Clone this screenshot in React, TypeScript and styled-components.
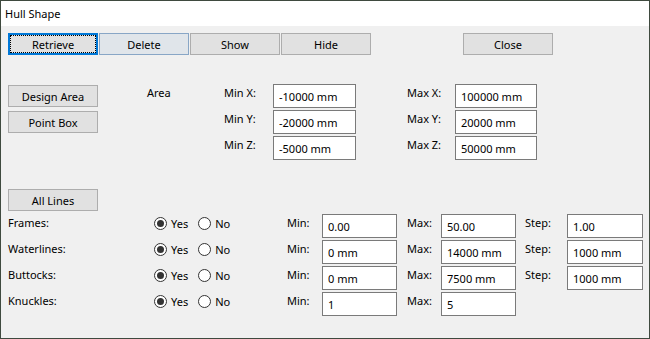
import React from 'react';
import styled, { createGlobalStyle, css } from 'styled-components';

const GlobalStyle = createGlobalStyle`
  html, body {
    margin: 0;
    padding: 0;
    background: #ffffff;
  }
  body {
    font-family: 'Noto Sans', 'Open Sans', sans-serif;
    font-size: 11px;
    color: #000;
  }
  * {
    box-sizing: border-box;
  }
`;

type LineRow = {
  name: string;
  min: string;
  max: string;
  step?: string;
};

const lineRows: LineRow[] = [
  { name: 'Frames:', min: '0.00', max: '50.00', step: '1.00' },
  { name: 'Waterlines:', min: '0 mm', max: '14000 mm', step: '1000 mm' },
  { name: 'Buttocks:', min: '0 mm', max: '7500 mm', step: '1000 mm' },
  { name: 'Knuckles:', min: '1', max: '5' },
];

const minCoords = [
  { label: 'Min X:', value: '-10000 mm' },
  { label: 'Min Y:', value: '-20000 mm' },
  { label: 'Min Z:', value: '-5000 mm' },
];

const maxCoords = [
  { label: 'Max X:', value: '100000 mm' },
  { label: 'Max Y:', value: '20000 mm' },
  { label: 'Max Z:', value: '50000 mm' },
];

const App = (): JSX.Element => {
  return (
    <>
      <GlobalStyle />
      <StyledWindow>
        <StyledTitleBar>Hull Shape</StyledTitleBar>
        <StyledBody>
          <StyledToolbar>
            <StyledButton $variant="focused">Retrieve</StyledButton>
            <StyledButton $variant="hover">Delete</StyledButton>
            <StyledButton>Show</StyledButton>
            <StyledButton>Hide</StyledButton>
            <StyledCloseButton>Close</StyledCloseButton>
          </StyledToolbar>

          <StyledAreaSection>
            <StyledSideButtons>
              <StyledButton>Design Area</StyledButton>
              <StyledButton>Point Box</StyledButton>
            </StyledSideButtons>
            <StyledAreaLabel>Area</StyledAreaLabel>
            <StyledCoordGroup $labelWidth={49} $inputWidth={83}>
              {minCoords.map((c) => (
                <React.Fragment key={c.label}>
                  <StyledFieldLabel>{c.label}</StyledFieldLabel>
                  <StyledInput defaultValue={c.value} />
                </React.Fragment>
              ))}
            </StyledCoordGroup>
            <StyledCoordGroup $labelWidth={48} $inputWidth={82} $offset={51}>
              {maxCoords.map((c) => (
                <React.Fragment key={c.label}>
                  <StyledFieldLabel>{c.label}</StyledFieldLabel>
                  <StyledInput defaultValue={c.value} />
                </React.Fragment>
              ))}
            </StyledCoordGroup>
          </StyledAreaSection>

          <StyledAllLines>
            <StyledButton>All Lines</StyledButton>
          </StyledAllLines>

          <StyledLinesGrid>
            {lineRows.map((row) => (
              <React.Fragment key={row.name}>
                <StyledFieldLabel>{row.name}</StyledFieldLabel>
                <StyledRadioGroup>
                  <StyledRadioOption>
                    <StyledRadioCircle $checked />
                    Yes
                  </StyledRadioOption>
                  <StyledRadioOption>
                    <StyledRadioCircle />
                    No
                  </StyledRadioOption>
                </StyledRadioGroup>
                <StyledFieldLabel>Min:</StyledFieldLabel>
                <StyledInput defaultValue={row.min} />
                <StyledFieldLabel $indent={10}>Max:</StyledFieldLabel>
                <StyledInput defaultValue={row.max} />
                {row.step && (
                  <>
                    <StyledFieldLabel $indent={9}>Step:</StyledFieldLabel>
                    <StyledInput defaultValue={row.step} />
                  </>
                )}
              </React.Fragment>
            ))}
          </StyledLinesGrid>
        </StyledBody>
      </StyledWindow>
    </>
  );
};

export default App;

const StyledWindow = styled.div`
  width: 650px;
  height: 339px;
  border: 1px solid #3f4a3f;
  background-color: #f0f0f0;
  display: flex;
  flex-direction: column;
  overflow: hidden;
`;

const StyledTitleBar = styled.div`
  height: 25px;
  line-height: 25px;
  padding-left: 4px;
  background-color: #ffffff;
  font-size: 11px;
`;

const StyledBody = styled.div`
  flex: 1;
  padding: 7px 0 0 7px;
`;

const StyledToolbar = styled.div`
  display: flex;
  gap: 1px;
`;

const StyledButton = styled.button<{ $variant?: 'focused' | 'hover' }>`
  width: 90px;
  height: 22px;
  padding: 0;
  margin: 0;
  font-family: inherit;
  font-size: 11px;
  color: #000;
  background-color: #e1e1e1;
  border: 1px solid #adadad;
  border-radius: 0;
  ${({ $variant }) =>
    $variant === 'focused' &&
    css`
      border: 2px solid #0078d7;
      outline: 1px dotted #000;
      outline-offset: -3px;
    `}
  ${({ $variant }) =>
    $variant === 'hover' &&
    css`
      background-color: #e0e5ea;
      border-color: #88a6c6;
    `}
`;

const StyledCloseButton = styled(StyledButton)`
  margin-left: 91px;
`;

const StyledAreaSection = styled.div`
  display: flex;
  align-items: flex-start;
  margin-top: 29px;
`;

const StyledSideButtons = styled.div`
  display: flex;
  flex-direction: column;
  gap: 4px;
  padding-top: 1px;
`;

const StyledAreaLabel = styled.div`
  width: 77px;
  margin-left: 49px;
  padding-top: 1px;
  line-height: 16px;
`;

const StyledCoordGroup = styled.div<{ $labelWidth: number; $inputWidth: number; $offset?: number }>`
  display: grid;
  grid-template-columns: ${({ $labelWidth, $inputWidth }) => `${$labelWidth}px ${$inputWidth}px`};
  grid-auto-rows: 24px;
  row-gap: 2px;
  margin-left: ${({ $offset }) => $offset ?? 0}px;
`;

const StyledFieldLabel = styled.div<{ $indent?: number }>`
  padding-top: 1px;
  padding-left: ${({ $indent }) => $indent ?? 0}px;
  line-height: 16px;
  white-space: nowrap;
`;

const StyledInput = styled.input`
  width: 100%;
  height: 24px;
  margin: 0;
  padding: 0 5px;
  font-family: inherit;
  font-size: 11px;
  color: #000;
  background-color: #fff;
  border: 1px solid #7a7a7a;
  border-radius: 0;
  outline: none;
`;

const StyledAllLines = styled.div`
  margin-top: 29px;
`;

const StyledLinesGrid = styled.div`
  display: grid;
  grid-template-columns: 146px 133px 35px 75px 44px 75px 51px 76px;
  grid-auto-rows: 24px;
  row-gap: 2px;
  margin-top: 3px;
`;

const StyledRadioGroup = styled.div`
  display: flex;
  align-items: center;
  gap: 10px;
  height: 16px;
  margin-top: 1px;
`;

const StyledRadioOption = styled.label`
  display: flex;
  align-items: center;
  gap: 4px;
`;

const StyledRadioCircle = styled.span<{ $checked?: boolean }>`
  position: relative;
  width: 13px;
  height: 13px;
  border: 1px solid #333;
  border-radius: 50%;
  background-color: #fff;

  &::after {
    content: '';
    display: ${({ $checked }) => ($checked ? 'block' : 'none')};
    position: absolute;
    left: 2px;
    top: 2px;
    width: 7px;
    height: 7px;
    border-radius: 50%;
    background-color: #333;
  }
`;
